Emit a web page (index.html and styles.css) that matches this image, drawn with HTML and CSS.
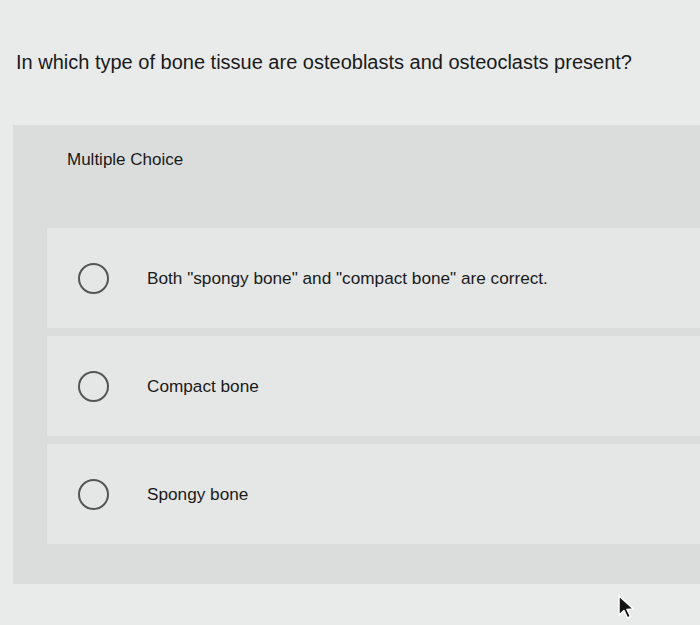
FILE: index.html
```html
<!DOCTYPE html>
<html>
<head>
<meta charset="utf-8">
<link rel="stylesheet" href="styles.css">
</head>
<body>
<div class="page">
  <h1 class="question">In which type of bone tissue are osteoblasts and osteoclasts present?</h1>
  <div class="panel">
    <div class="label">Multiple Choice</div>
    <div class="options">
      <div class="option">
        <span class="radio"></span>
        <span class="text">Both "spongy bone" and "compact bone" are correct.</span>
      </div>
      <div class="option">
        <span class="radio"></span>
        <span class="text">Compact bone</span>
      </div>
      <div class="option">
        <span class="radio"></span>
        <span class="text">Spongy bone</span>
      </div>
    </div>
  </div>
  <svg class="cursor" width="20" height="26" viewBox="0 0 20 26">
    <path d="M2 1 L2 20 L7 15.5 L10.5 23 L13.5 21.5 L10 14.5 L16.5 14 Z" fill="#111" stroke="#fff" stroke-width="1.5" stroke-linejoin="round"/>
  </svg>
</div>
</body>
</html>
```

FILE: styles.css
```css
html, body {
  margin: 0;
  padding: 0;
  background: #e9eaea;
}
.page {
  position: relative;
  width: 700px;
  height: 625px;
  overflow: hidden;
  font-family: "Liberation Sans", Arial, sans-serif;
  color: #1a1a1a;
}
.question {
  margin: 0;
  padding: 50px 0 0 16px;
  font-size: 20px;
  font-weight: normal;
  line-height: 24px;
  height: 75px;
  box-sizing: border-box;
}
.panel {
  margin: 50px 0 0 13px;
  background: #dbdddc;
  padding: 24px 0 40px 34px;
}
.label {
  font-size: 17px;
  line-height: 22px;
  padding-left: 20px;
  height: 79px;
}
.options {
  display: flex;
  flex-direction: column;
  gap: 8px;
}
.option {
  display: flex;
  align-items: center;
  height: 100px;
  background: #e5e7e6;
  padding-left: 31px;
}
.radio {
  width: 31px;
  height: 31px;
  border: 2px solid #555;
  border-radius: 50%;
  box-sizing: border-box;
  flex: none;
}
.text {
  margin-left: 38px;
  font-size: 17.2px;
  color: #1a1a1a;
}
.cursor {
  position: absolute;
  left: 617px;
  top: 595px;
}
```
